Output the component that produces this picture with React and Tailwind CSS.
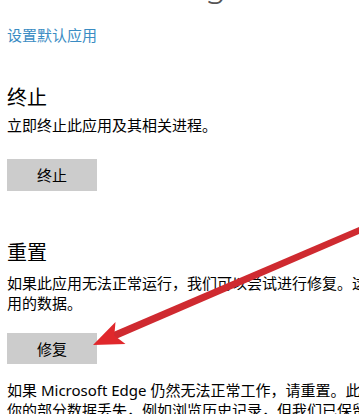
import React from "react";

function Arrow() {
  return (
    <svg
      className="absolute left-0 top-0 pointer-events-none"
      width="359"
      height="414"
      viewBox="0 0 359 414">
      <polygon points="111,333 116,339 368,230 366,224" fill="#cf2a30" />
      <polygon points="93,345 115.5,322 114.3,335.5 125.5,344" fill="#e0282c" />
    </svg>
  );
}

export default function App() {
  return (
    <div
      className="relative w-[359px] h-[414px] overflow-hidden bg-white text-black"
      style={{ fontFamily: '"Noto Sans", "Noto Sans CJK SC", sans-serif' }}>
      <div className="flex flex-col items-start pl-[7px] w-[460px]">
        <h1 className="mt-[-39px] text-[35px] leading-[44px] font-light text-[#555] whitespace-nowrap">
          Microsoft Edge
        </h1>
        <a className="mt-[20px] text-[15px] leading-[20px] text-[#3a8cc3]">设置默认应用</a>

        <h2 className="mt-[39px] text-[20px] leading-[28px] font-normal">终止</h2>
        <p className="mt-[3px] text-[15px] leading-[20px]">立即终止此应用及其相关进程。</p>
        <button className="mt-[24px] w-[90px] h-[32px] bg-[#cccccc] text-[15px] leading-[20px]">
          终止
        </button>

        <h2 className="mt-[48px] text-[20px] leading-[28px] font-normal">重置</h2>
        <p className="mt-[6px] text-[15px] leading-[20px] whitespace-nowrap">
          如果此应用无法正常运行，我们可以尝试进行修复。这不会影响应
          <br />
          用的数据。
        </p>
        <button className="mt-[20px] w-[90px] h-[31px] bg-[#cccccc] text-[15px] leading-[20px]">
          修复
        </button>

        <p className="mt-[16px] text-[15px] leading-[20px] whitespace-nowrap">
          如果 Microsoft Edge 仍然无法正常工作，请重置。此操作会导致
          <br />
          你的部分数据丢失，例如浏览历史记录，但我们已保留你的收藏夹。
        </p>
      </div>
      <Arrow />
    </div>
  );
}
